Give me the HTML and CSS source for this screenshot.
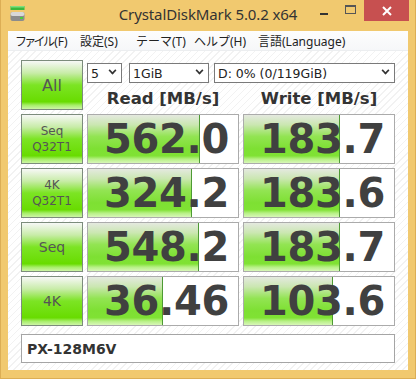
FILE: index.html
```html
<!DOCTYPE html>
<html lang="ja">
<head>
  <meta charset="UTF-8">
  <title>CrystalDiskMark 5.0.2 x64</title>
  <link rel="stylesheet" href="styles.css">
</head>
<body>
  <div class="window">
    <div class="titlebar">
      <div class="app-icon">
        <svg width="16" height="18" viewBox="0 0 16 18">
          <rect x="0.5" y="1" width="14" height="4" fill="#3cb83c"/>
          <rect x="0.5" y="1" width="14" height="1.5" fill="#7ee07e"/>
          <rect x="0.5" y="7" width="14" height="9" rx="2" fill="#8c8c8c"/>
          <rect x="0.5" y="7" width="14" height="4" rx="2" fill="#d8d8d8"/>
          <rect x="10" y="12" width="3" height="2" fill="#4ccc3c"/>
        </svg>
      </div>
      <div class="title">CrystalDiskMark 5.0.2 x64</div>
      <div class="controls">
        <div class="ctl ctl-min"><span class="dash"></span></div>
        <div class="ctl ctl-max"><span class="box"></span></div>
        <div class="ctl ctl-close">
          <svg width="10" height="10" viewBox="0 0 10 10">
            <path d="M1 1 L9 9 M9 1 L1 9" stroke="#fff" stroke-width="2"/>
          </svg>
        </div>
      </div>
    </div>

    <div class="frame">
      <div class="menubar">
        <span class="menu-item m1"><span class="narrow">ファイル</span>(F)</span>
        <span class="menu-item m2">設定(S)</span>
        <span class="menu-item m3">テーマ(T)</span>
        <span class="menu-item m4">ヘルプ(H)</span>
        <span class="menu-item m5">言語(Language)</span>
      </div>

      <div class="client">
        <div class="grid">
          <div class="btn btn-all">All</div>
          <div class="head">
            <div class="selects">
              <div class="combo c-count"><span>5</span><i class="chev"></i></div>
              <div class="combo c-size"><span>1GiB</span><i class="chev"></i></div>
              <div class="combo c-drive"><span>D: 0% (0/119GiB)</span><i class="chev"></i></div>
            </div>
            <div class="labels">
              <div class="label">Read [MB/s]</div>
              <div class="label">Write [MB/s]</div>
            </div>
          </div>

          <div class="btn btn-small">Seq<br>Q32T1</div>
          <div class="result"><div class="bar" style="width: 112px"></div><span class="num">562.0</span></div>
          <div class="result"><div class="bar" style="width: 96px"></div><span class="num">183.7</span></div>

          <div class="btn btn-small">4K<br>Q32T1</div>
          <div class="result"><div class="bar" style="width: 104px"></div><span class="num">324.2</span></div>
          <div class="result"><div class="bar" style="width: 96px"></div><span class="num">183.6</span></div>

          <div class="btn btn-mid">Seq</div>
          <div class="result"><div class="bar" style="width: 111px"></div><span class="num">548.2</span></div>
          <div class="result"><div class="bar" style="width: 96px"></div><span class="num">183.7</span></div>

          <div class="btn btn-mid">4K</div>
          <div class="result"><div class="bar" style="width: 75px"></div><span class="num">36.46</span></div>
          <div class="result"><div class="bar" style="width: 89px"></div><span class="num">103.6</span></div>
        </div>

        <div class="comment">PX-128M6V</div>
      </div>
    </div>
  </div>
</body>
</html>
```

FILE: styles.css
```css
body {
  margin: 0;
  background: #f1c96f;
  font-family: "DejaVu Sans", sans-serif;
}
.window {
  width: 416px;
  height: 379px;
  box-sizing: border-box;
  background: #f1c96f;
  border: 1px solid #dcae55;
  border-top: none;
  display: flex;
  flex-direction: column;
}
.titlebar {
  height: 31px;
  display: grid;
  grid-template-columns: 1fr auto 1fr;
  align-items: start;
}
.app-icon {
  padding: 5px 0 0 9px;
}
.title {
  font-family: "Noto Sans", sans-serif;
  font-size: 15px;
  color: #333;
  padding-top: 4px;
  letter-spacing: -0.1px;
}
.controls {
  display: flex;
  justify-content: flex-end;
  margin-right: 6px;
}
.ctl {
  height: 21px;
  display: flex;
  align-items: center;
  justify-content: center;
}
.ctl-min {
  width: 26px;
}
.ctl-min .dash {
  width: 8px;
  height: 2px;
  margin-top: 7px;
  background: #333;
}
.ctl-max {
  width: 27px;
}
.ctl-max .box {
  width: 9px;
  height: 6px;
  margin-top: -2px;
  border: 1px solid #555;
  border-top-width: 2px;
}
.ctl-close {
  width: 45px;
  background: #c75050;
}
.frame {
  flex: 1;
  padding: 0 7px 8px 7px;
  display: flex;
  flex-direction: column;
}
.menubar {
  height: 19px;
  background: linear-gradient(#fdfdfd, #f6f7f9);
  border-bottom: 1px solid #eceef0;
  display: flex;
  align-items: center;
  font-family: "Noto Sans", "Noto Sans CJK JP", sans-serif;
  font-size: 12px;
  color: #222;
  white-space: nowrap;
}
.narrow {
  letter-spacing: -2.7px;
  margin-right: 2px;
}
.m1 { margin-left: 7px; width: 65px; }
.m2 { width: 56px; }
.m3 { width: 58px; }
.m4 { width: 64px; }
.client {
  flex: 1;
  background: repeating-linear-gradient(135deg, #ffffff 0, #ffffff 4px, #f2f2f2 4px, #f2f2f2 5px);
  padding: 9px 13px 0 13px;
}
.grid {
  display: grid;
  grid-template-columns: 62px 152px 152px;
  grid-auto-rows: 50px;
  gap: 4px;
}
.btn {
  box-sizing: border-box;
  border: 1px solid #7c8c7c;
  background: linear-gradient(#f7f8f6 0%, #c8eca8 25%, #7ce424 50%, #68dc00 85%, #a6ee68 92%, #cdf5a6 100%);
  color: #555;
  display: flex;
  align-items: center;
  justify-content: center;
  text-align: center;
}
.btn-all {
  font-size: 16px;
}
.btn-small {
  font-size: 12px;
  line-height: 16px;
}
.btn-mid {
  font-size: 14px;
}
.head {
  grid-column: 2 / 4;
  display: flex;
  flex-direction: column;
}
.selects {
  display: flex;
  margin-top: 3px;
  height: 20px;
}
.combo {
  box-sizing: border-box;
  height: 20px;
  background: #fff;
  border: 1px solid #7a7a7a;
  display: flex;
  align-items: center;
  justify-content: space-between;
  padding: 0 5px 0 3px;
  font-size: 12.5px;
  color: #222;
}
.c-count { width: 35px; }
.c-size { width: 80px; margin-left: 7px; }
.c-drive { width: 181px; margin-left: 5px; }
.chev {
  width: 7px;
  height: 7px;
  border-right: 2px solid #333;
  border-bottom: 2px solid #333;
  transform: rotate(45deg) scale(0.8);
  margin-top: -5px;
  box-sizing: border-box;
}
.labels {
  display: grid;
  grid-template-columns: 152px 152px;
  gap: 4px;
  margin-top: 6px;
}
.label {
  text-align: center;
  font-weight: bold;
  font-size: 16.5px;
  color: #333;
}
.result {
  position: relative;
  box-sizing: border-box;
  border: 1px solid #ababab;
  background: #fff;
  display: flex;
  align-items: center;
  justify-content: flex-end;
  padding-right: 9px;
  overflow: hidden;
}
.bar {
  position: absolute;
  left: 0;
  top: 0;
  bottom: 0;
  box-sizing: border-box;
  border-right: 1px solid #4d9a34;
  background: linear-gradient(#e4e9df 0%, #cbe7b2 20%, #92e452 45%, #7ee033 70%, #80e234 85%, #b7f086 92%, #d8f7b8 100%);
}
.num {
  position: relative;
  font-weight: bold;
  font-size: 40px;
  color: #404040;
  letter-spacing: -0.3px;
}
.comment {
  box-sizing: border-box;
  margin-top: 8px;
  height: 29px;
  width: 374px;
  border: 1px solid #a5a5a5;
  background: #fff;
  display: flex;
  align-items: center;
  padding-left: 5px;
  font-weight: bold;
  font-size: 14px;
  color: #333;
}
```
